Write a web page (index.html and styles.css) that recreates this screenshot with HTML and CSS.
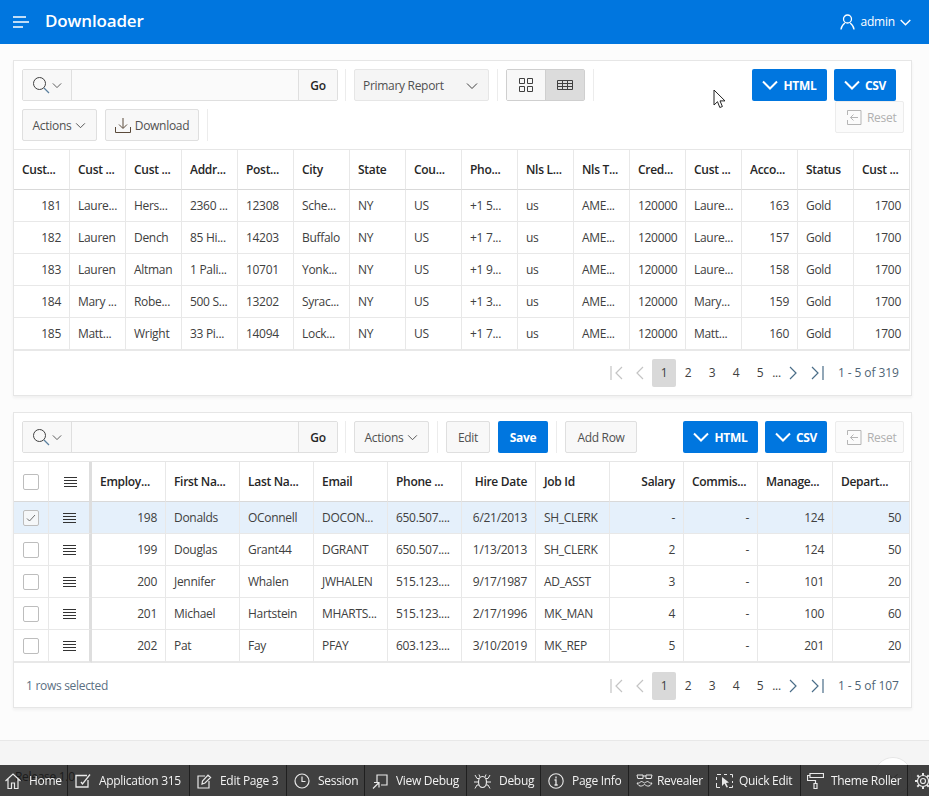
FILE: index.html
```html
<!DOCTYPE html>
<html lang="en">
<head>
<meta charset="utf-8">
<title>Downloader</title>
<link rel="stylesheet" href="styles.css">
</head>
<body>
<svg class="defs" width="0" height="0" aria-hidden="true">
  <symbol id="search" viewBox="0 0 18 18"><circle cx="7.500" cy="7.500" r="6" fill="none" stroke="#404040"/><path d="M12 12l5 5" stroke="#5a7f9e" stroke-width="1.200" fill="none"/></symbol>
  <symbol id="chev" viewBox="0 0 12 8"><path d="M1 1.500l5 5 5-5" fill="none" stroke="currentColor" stroke-width="1"/></symbol>
  <symbol id="chevb" viewBox="0 0 16 10"><path d="M1 1.500l7 7 7-7" fill="none" stroke="currentColor" stroke-width="2"/></symbol>
  <symbol id="reset" viewBox="0 0 15 15"><path d="M.5 5V.5h13.500v14H.5V10M11 7.500H3.500M6.500 4.500l-3 3 3 3" fill="none" stroke="#b5b5b5"/></symbol>
  <symbol id="handle" viewBox="0 0 13 10"><path d="M0 .5h13M0 3.500h13M0 6.500h13M0 9.500h13" stroke="#333" stroke-width="1"/></symbol>
  <symbol id="first" viewBox="0 0 13 14"><path d="M1 0v14M12 1L6 7l6 6" fill="none" stroke="#c4c4c4" stroke-width="1.200"/></symbol>
  <symbol id="prev" viewBox="0 0 8 14"><path d="M7 1L1 7l6 6" fill="none" stroke="#c4c4c4" stroke-width="1.200"/></symbol>
  <symbol id="next" viewBox="0 0 8 14"><path d="M1 1l6 6-6 6" fill="none" stroke="#4a6d88" stroke-width="1.200"/></symbol>
  <symbol id="last" viewBox="0 0 13 14"><path d="M12 0v14M1 1l6 6-6 6" fill="none" stroke="#4a6d88" stroke-width="1.200"/></symbol>
</svg>

<header class="topbar">
  <svg class="burger" width="16" height="12" viewBox="0 0 16 12"><path d="M0 1h13M0 6h16M0 11h10" stroke="#fff" stroke-width="1.600"/></svg>
  <h1 class="brand">Downloader</h1>
  <div class="user">
    <svg width="15" height="16" viewBox="0 0 15 16"><circle cx="7.500" cy="5" r="4" fill="none" stroke="#fff" stroke-width="1.300"/><path d="M1 15.500c0-3 2-5 3.800-6.500M14 15.500c0-3-2-5-3.800-6.500" fill="none" stroke="#fff" stroke-width="1.300"/></svg>
    <span class="user-name">admin</span>
    <svg width="11" height="7" viewBox="0 0 11 7"><path d="M.7 1l4.800 4.800L10.300 1" fill="none" stroke="#fff" stroke-width="1.400"/></svg>
  </div>
</header>

<main class="content">
  <section class="panel panel-a">
    <div class="toolbar toolbar-a">
      <div class="tb-left">
        <div class="tb-row">
          <div class="search">
            <button class="search-btn"><svg width="18" height="18"><use href="#search"/></svg><svg class="c" width="10" height="7"><use href="#chev"/></svg></button>
            <div class="search-input"></div>
            <button class="go">Go</button>
          </div>
          <span class="sep"></span>
          <div class="select">Primary Report<svg class="select-chev" width="12" height="8"><use href="#chev"/></svg></div>
          <span class="sep"></span>
          <div class="toggle">
            <button class="tg">
              <svg width="14" height="14" viewBox="0 0 14 14"><path d="M.5.5h5v5h-5zM8.500.5h5v5h-5zM.5 8.500h5v5h-5zM8.500 8.500h5v5h-5z" fill="none" stroke="#404040"/></svg>
            </button>
            <button class="tg tg-on">
              <svg width="16" height="10" viewBox="0 0 16 10"><path d="M.5.5h15v9H.500zM.5 3.500h15M.5 6.500h15M5.500 .5v9M10.500 .5v9" fill="none" stroke="#404040"/></svg>
            </button>
          </div>
          <span class="sep"></span>
        </div>
        <div class="tb-row">
          <button class="btn w-actions">Actions<svg class="c" width="11" height="7"><use href="#chev"/></svg></button>
          <button class="btn w-download">
            <svg width="16" height="15" viewBox="0 0 16 15"><path d="M8 0v10M4 6.500l4 4 4-4M.5 9v5.500h15V9" fill="none" stroke="#5a4a3a"/></svg>Download
          </button>
          <span class="sep"></span>
        </div>
      </div>
      <div class="tb-right">
        <button class="btn-p w-html"><svg width="16" height="10"><use href="#chevb"/></svg>HTML</button>
        <button class="btn-p w-csv"><svg width="16" height="10"><use href="#chevb"/></svg>CSV</button>
        <button class="btn-off"><svg width="15" height="15"><use href="#reset"/></svg>Reset</button>
      </div>
    </div>
    <table class="grid grid-a">
      <thead>
        <tr><th>Cust...</th><th>Cust ...</th><th>Cust ...</th><th>Addr...</th><th>Post...</th><th>City</th><th>State</th><th>Cou...</th><th>Pho...</th><th>Nls L...</th><th>Nls T...</th><th>Cred...</th><th>Cust ...</th><th>Acco...</th><th>Status</th><th>Cust ...</th></tr>
      </thead>
      <tbody>
        <tr><td class="r">181</td><td>Laure...</td><td>Hers...</td><td>2360 ...</td><td>12308</td><td>Sche...</td><td>NY</td><td>US</td><td>+1 5...</td><td>us</td><td>AME...</td><td class="r">120000</td><td>Laure...</td><td class="r">163</td><td>Gold</td><td class="r">1700</td></tr>
        <tr><td class="r">182</td><td>Lauren</td><td>Dench</td><td>85 Hi...</td><td>14203</td><td>Buffalo</td><td>NY</td><td>US</td><td>+1 7...</td><td>us</td><td>AME...</td><td class="r">120000</td><td>Laure...</td><td class="r">157</td><td>Gold</td><td class="r">1700</td></tr>
        <tr><td class="r">183</td><td>Lauren</td><td>Altman</td><td>1 Pali...</td><td>10701</td><td>Yonk...</td><td>NY</td><td>US</td><td>+1 9...</td><td>us</td><td>AME...</td><td class="r">120000</td><td>Laure...</td><td class="r">158</td><td>Gold</td><td class="r">1700</td></tr>
        <tr><td class="r">184</td><td>Mary ...</td><td>Robe...</td><td>500 S...</td><td>13202</td><td>Syrac...</td><td>NY</td><td>US</td><td>+1 3...</td><td>us</td><td>AME...</td><td class="r">120000</td><td>Mary...</td><td class="r">159</td><td>Gold</td><td class="r">1700</td></tr>
        <tr><td class="r">185</td><td>Matt...</td><td>Wright</td><td>33 Pi...</td><td>14094</td><td>Lock...</td><td>NY</td><td>US</td><td>+1 7...</td><td>us</td><td>AME...</td><td class="r">120000</td><td>Matt...</td><td class="r">160</td><td>Gold</td><td class="r">1700</td></tr>
      </tbody>
    </table>
    <div class="foot">
      <div class="pager">
        <span class="pg"><svg width="13" height="14"><use href="#first"/></svg></span>
        <span class="pg"><svg width="8" height="14"><use href="#prev"/></svg></span>
        <span class="pg pg-on">1</span><span class="pg">2</span><span class="pg">3</span><span class="pg">4</span><span class="pg">5</span><span class="dots">...</span>
        <span class="pg"><svg width="8" height="14"><use href="#next"/></svg></span>
        <span class="pg"><svg width="13" height="14"><use href="#last"/></svg></span>
        <span class="range">1 - 5 of 319</span>
      </div>
    </div>
  </section>

  <section class="panel panel-b">
    <div class="toolbar toolbar-b">
      <div class="search">
        <button class="search-btn"><svg width="18" height="18"><use href="#search"/></svg><svg class="c" width="10" height="7"><use href="#chev"/></svg></button>
        <div class="search-input"></div>
        <button class="go">Go</button>
      </div>
      <span class="sep"></span>
      <button class="btn w-actions">Actions<svg class="c" width="11" height="7"><use href="#chev"/></svg></button>
      <span class="sep"></span>
      <button class="btn w-edit">Edit</button>
      <button class="btn-p w-save">Save</button>
      <span class="sep"></span>
      <button class="btn w-add">Add Row</button>
      <div class="tb-end">
        <button class="btn-p w-html"><svg width="16" height="10"><use href="#chevb"/></svg>HTML</button>
        <button class="btn-p w-csv"><svg width="16" height="10"><use href="#chevb"/></svg>CSV</button>
        <button class="btn-off"><svg width="15" height="15"><use href="#reset"/></svg>Reset</button>
      </div>
    </div>
    <table class="grid grid-b">
      <colgroup><col class="c1"><col class="c2"><col class="cn"><col class="cn"><col class="cn"><col class="cn"><col class="cn"><col class="cn"><col class="cn"><col class="cn"><col class="cn"><col class="c12"><col class="c13"></colgroup>
      <thead>
        <tr><th class="ctr"><span class="cb"></span></th><th class="ctr frozen"><svg class="hd hd-top" width="13" height="10"><use href="#handle"/></svg></th><th>Employ...</th><th>First Na...</th><th>Last Na...</th><th>Email</th><th>Phone ...</th><th class="r">Hire Date</th><th>Job Id</th><th class="r">Salary</th><th>Commis...</th><th>Manage...</th><th>Depart...</th></tr>
      </thead>
      <tbody>
        <tr class="sel"><td class="ctr"><span class="cb"><svg width="10" height="8" viewBox="0 0 10 8"><path d="M1 4.500l2.500 2.500L9 1" fill="none" stroke="#707070"/></svg></span></td><td class="ctr frozen"><svg class="hd" width="13" height="10"><use href="#handle"/></svg></td><td class="r">198</td><td>Donalds</td><td>OConnell</td><td>DOCON...</td><td>650.507....</td><td class="r">6/21/2013</td><td>SH_CLERK</td><td class="r">-</td><td class="r">-</td><td class="r">124</td><td class="r">50</td></tr>
        <tr><td class="ctr"><span class="cb"></span></td><td class="ctr frozen"><svg class="hd" width="13" height="10"><use href="#handle"/></svg></td><td class="r">199</td><td>Douglas</td><td>Grant44</td><td>DGRANT</td><td>650.507....</td><td class="r">1/13/2013</td><td>SH_CLERK</td><td class="r">2</td><td class="r">-</td><td class="r">124</td><td class="r">50</td></tr>
        <tr><td class="ctr"><span class="cb"></span></td><td class="ctr frozen"><svg class="hd" width="13" height="10"><use href="#handle"/></svg></td><td class="r">200</td><td>Jennifer</td><td>Whalen</td><td>JWHALEN</td><td>515.123....</td><td class="r">9/17/1987</td><td>AD_ASST</td><td class="r">3</td><td class="r">-</td><td class="r">101</td><td class="r">20</td></tr>
        <tr><td class="ctr"><span class="cb"></span></td><td class="ctr frozen"><svg class="hd" width="13" height="10"><use href="#handle"/></svg></td><td class="r">201</td><td>Michael</td><td>Hartstein</td><td>MHARTS...</td><td>515.123....</td><td class="r">2/17/1996</td><td>MK_MAN</td><td class="r">4</td><td class="r">-</td><td class="r">100</td><td class="r">60</td></tr>
        <tr><td class="ctr"><span class="cb"></span></td><td class="ctr frozen"><svg class="hd" width="13" height="10"><use href="#handle"/></svg></td><td class="r">202</td><td>Pat</td><td>Fay</td><td>PFAY</td><td>603.123....</td><td class="r">3/10/2019</td><td>MK_REP</td><td class="r">5</td><td class="r">-</td><td class="r">201</td><td class="r">20</td></tr>
      </tbody>
    </table>
    <div class="foot foot-b">
      <span class="selected">1 rows selected</span>
      <div class="pager">
        <span class="pg"><svg width="13" height="14"><use href="#first"/></svg></span>
        <span class="pg"><svg width="8" height="14"><use href="#prev"/></svg></span>
        <span class="pg pg-on">1</span><span class="pg">2</span><span class="pg">3</span><span class="pg">4</span><span class="pg">5</span><span class="dots">...</span>
        <span class="pg"><svg width="8" height="14"><use href="#next"/></svg></span>
        <span class="pg"><svg width="13" height="14"><use href="#last"/></svg></span>
        <span class="range">1 - 5 of 107</span>
      </div>
    </div>
  </section>
</main>

<footer class="page-foot">Release 1.0</footer>
<div class="to-top"><svg width="12" height="7"><use href="#chev"/></svg></div>

<nav class="devbar">
  <a class="dv dv-home"><svg width="16" height="16" viewBox="0 0 16 16"><path d="M.5 8L8 1l7.500 7M3 6v9.500h3.500V10h3v5.500H13V6" fill="none" stroke="#e8e8e8" stroke-width="1.200"/></svg>Home</a>
  <a class="dv"><svg width="16" height="14" viewBox="0 0 16 14"><path d="M12 1.500H1V13h12V6M6 8l1.500 2L15 .5" fill="none" stroke="#e8e8e8" stroke-width="1.300"/></svg>Application 315</a>
  <a class="dv"><svg width="15" height="15" viewBox="0 0 15 15"><path d="M8 2H1v12h11V7M5 10l.5-3L11 1.200l2.600 2.300L8 9z" fill="none" stroke="#e8e8e8" stroke-width="1.200"/></svg>Edit Page 3</a>
  <a class="dv"><svg width="16" height="16" viewBox="0 0 16 16"><circle cx="8" cy="8" r="7" fill="none" stroke="#e8e8e8" stroke-width="1.200"/><path d="M8 3.500V8.500h3.500" fill="none" stroke="#e8e8e8" stroke-width="1.200"/></svg>Session</a>
  <a class="dv"><svg width="16" height="15" viewBox="0 0 16 15"><path d="M5 8V1h10v10H9M1 14.500l6-6M2 8.500h5v5" fill="none" stroke="#e8e8e8" stroke-width="1.200"/></svg>View Debug</a>
  <a class="dv"><svg width="17" height="15" viewBox="0 0 17 15"><ellipse cx="8.500" cy="8" rx="4" ry="5.500" fill="none" stroke="#e8e8e8" stroke-width="1.200"/><path d="M1 1l2 3.500h2M16 1l-2 3.500h-2M0 8h4.500M17 8h-4.500M1 14.500l2-3.500h2M16 14.500l-2-3.500h-2M6 3l-1-2.500M11 3l1-2.500" fill="none" stroke="#e8e8e8" stroke-width="1"/></svg>Debug</a>
  <a class="dv"><svg width="16" height="16" viewBox="0 0 16 16"><circle cx="8" cy="8" r="7.200" fill="none" stroke="#e8e8e8" stroke-width="1.100"/><path d="M8 3.500v2M6.500 7H8v5M6.500 12h3.200" fill="none" stroke="#e8e8e8" stroke-width="1.300"/></svg>Page Info</a>
  <a class="dv dv-rev"><svg width="17" height="14" viewBox="0 0 17 14"><path d="M1 1h6v3.500H1.800zM10 1h6l-.8 3.500H10zM7 2h3M1 9c2 .5 3-.5 4-1.500 1 0 2 .5 3.500 1.500C10 8 11 7.500 12 7.500c1 1 2 2 4 1.500-1 2-2.500 3.500-4.500 3-1.500-.3-2-1-3-1.500-1 .5-1.500 1.200-3 1.500C3.500 12.500 2 11 1 9z" fill="none" stroke="#e8e8e8" stroke-width="1"/></svg>Revealer</a>
  <a class="dv dv-quick"><svg width="17" height="14" viewBox="0 0 17 14"><path d="M1 .5h4M8 .5h3M14 .5h2.500v3M.5 3v3M.5 9v4.500H4M16.500 7v2M13 13.500h3.500v-2" fill="none" stroke="#e8e8e8" stroke-width="1"/><path d="M6 3l7 5.500-3 .5 2 4-1.500.5-2-4L6 12z" fill="#e8e8e8"/></svg>Quick Edit</a>
  <a class="dv dv-theme"><svg width="17" height="16" viewBox="0 0 17 16"><path d="M3 .5h13.500v4H3zM3 2.500H.5v5h8v3M7 10.500h3v5H7z" fill="none" stroke="#e8e8e8" stroke-width="1.200"/></svg>Theme Roller</a>
  <a class="dv"><svg width="16" height="16" viewBox="0 0 16 16"><circle cx="8" cy="8" r="2.500" fill="none" stroke="#e8e8e8" stroke-width="1.200"/><circle cx="8" cy="8" r="5.500" fill="none" stroke="#e8e8e8" stroke-width="1.200"/><path d="M8 0v2.500M8 13.500V16M0 8h2.500M13.500 8H16M2.300 2.300l1.800 1.800M11.900 11.900l1.800 1.800M13.700 2.300l-1.800 1.800M4.100 11.900l-1.800 1.800" stroke="#e8e8e8" stroke-width="2"/></svg></a>
</nav>

<svg class="cursor" width="13" height="20" viewBox="0 0 13 20"><path d="M1 1v15l3.500-3.300 2.300 5.800 2.600-1-2.400-5.600H12z" fill="#fff" stroke="#222" stroke-width="1"/></svg>
</body>
</html>
```

FILE: styles.css
```css
* { box-sizing: border-box; }
html, body { margin: 0; height: 796px; overflow: hidden; }
body {
  display: flex;
  flex-direction: column;
  background: #fcfcfc;
  color: #404040;
  font: 12px/16px "Open Sans", "Noto Sans", sans-serif;
  letter-spacing: -0.3px;
}
.defs { position: absolute; }
button { font: inherit; letter-spacing: inherit; color: inherit; padding: 0; margin: 0; cursor: default; }

.topbar { flex: none; height: 44px; display: flex; align-items: center; background: #0076df; color: #fff; padding: 0 18px 0 13px; }
.burger { margin-right: 16px; }
.brand { margin: 0 0 2px; font-size: 17px; font-weight: 600; letter-spacing: -0.15px; line-height: 24px; }
.user { margin-left: auto; display: flex; align-items: center; gap: 5px; font-size: 12px; letter-spacing: -0.2px; }
.user-name { color: #fff; font-weight: 500; }

.content { flex: none; padding: 16px 17px 0 13px; display: flex; flex-direction: column; gap: 16px; }
.panel { width: 899px; background: #fff; border: 1px solid #e6e6e6; box-shadow: 0 2px 3px rgba(0,0,0,.05); }
.panel-a { height: 336px; }
.panel-b { height: 296px; }

.toolbar { display: flex; padding: 8px 7px 8px 8px; border-bottom: 1px solid #e6e6e6; }
.toolbar-a { height: 89px; justify-content: space-between; }
.toolbar-b { height: 49px; }
.tb-left { display: flex; flex-direction: column; gap: 8px; }
.tb-row { display: flex; }
.tb-right { width: 153px; display: flex; flex-wrap: wrap; justify-content: flex-end; align-content: flex-start; gap: 0 7px; }
.tb-end { margin-left: auto; display: flex; gap: 7px; }
.tb-right .w-csv { margin-right: 8px; }
.tb-end .w-csv { margin-right: 1px; }

.search { width: 316px; height: 32px; margin-right: -1px; display: flex; border: 1px solid #dfdfdf; border-radius: 2px; background: #f8f8f8; }
.search-btn { flex: none; width: 49px; border: 0; border-right: 1px solid #dfdfdf; background: #f8f8f8; display: flex; align-items: center; padding-left: 9px; gap: 2px; }
.search-btn .c { color: #404040; }
.search-input { flex: 1; background: #fafafa; }
.go { flex: none; width: 39px; border: 0; border-left: 1px solid #dfdfdf; background: #f8f8f8; font-weight: 600; color: #262626; padding-top: 1px; }

.sep { flex: none; width: 1px; height: 32px; background: #ececec; margin: 0 8px; }

.select { flex: none; width: 135px; height: 32px; display: flex; align-items: center; justify-content: space-between; padding: 1px 10px 0 8px; background: #f5f5f5; border: 1px solid #e6e6e6; border-radius: 2px; color: #505050; }
.select-chev { color: #404040; }

.toggle { flex: none; display: flex; width: 79px; height: 32px; border: 1px solid #cfcfcf; border-radius: 2px; }
.tg { flex: 1; border: 0; background: #f8f8f8; display: flex; align-items: center; justify-content: center; }
.tg-on { background: #dcdcdc; border-left: 1px solid #cfcfcf; }

.btn { flex: none; height: 32px; display: flex; align-items: center; justify-content: center; gap: 3px; padding-top: 1px; background: #f8f8f8; border: 1px solid #dfdfdf; border-radius: 2px; color: #505050; }
.btn .c { color: #404040; margin-left: 1px; }
.w-actions { width: 75px; }
.w-download { width: 94px; margin-left: 8px; gap: 4px; }
.w-edit { width: 44px; }
.w-add { width: 72px; }
.btn-p { flex: none; height: 32px; display: flex; align-items: center; justify-content: center; gap: 5px; padding-top: 1px; background: #0076df; border: 0; border-radius: 2px; color: #fff; font-weight: 700; }
.btn-p svg { margin-top: -1px; }
.w-html { width: 75px; }
.w-csv { width: 62px; }
.w-save { width: 50px; margin-left: 8px; }
.btn-off { flex: none; width: 69px; height: 32px; display: flex; align-items: center; gap: 5px; padding: 1px 0 0 11px; background: #fbfbfb; border: 1px solid #ececec; border-radius: 2px; color: #b0b0b0; }

.grid { border-collapse: separate; border-spacing: 0; table-layout: fixed; }
.grid th, .grid td { padding: 0 8px; border-right: 1px solid #e8e8e8; white-space: nowrap; overflow: hidden; text-align: left; }
.grid th { height: 40px; font-weight: 600; color: #262626; border-bottom: 1px solid #d9d9d9; }
.grid td { height: 32px; border-bottom: 1px solid #e8e8e8; }
.grid tbody tr:last-child td { border-bottom: 2px solid #e8e8e8; height: 33px; }
.grid .r { text-align: right; }
.grid .ctr { text-align: center; padding: 0; }
.grid-a { width: 896px; }
.grid-a th, .grid-a td { width: 56px; }
.grid-b { width: 896px; }
.c1 { width: 35px; } .c2 { width: 43px; } .cn { width: 74px; } .c12 { width: 75px; } .c13 { width: 77px; }
.grid .frozen { border-right: 3px solid #dedede; }
.sel td { background: #e5f0fb; }
.cb { display: inline-flex; align-items: center; justify-content: center; width: 16px; height: 16px; border: 1px solid #bdbdbd; border-radius: 2px; background: #fff; vertical-align: middle; }
.sel .cb { background: #f5f7f9; }
.hd { display: inline-block; vertical-align: middle; shape-rendering: crispEdges; }
.hd-top { margin-left: 3px; }

.foot { display: flex; align-items: center; justify-content: flex-end; height: 44px; padding: 0 12px; }
.foot-b { justify-content: space-between; height: 45px; }
.selected { color: #5b7083; }
.pager { display: flex; align-items: center; }
.pg { width: 24px; height: 28px; display: flex; align-items: center; justify-content: center; border-radius: 2px; }
.pg-on { background: #d9d9d9; }
.dots { width: 9px; text-align: center; }
.range { width: 61px; margin-left: 9px; color: #4f6475; letter-spacing: -0.1px; white-space: nowrap; }

.page-foot { flex: 1; margin-top: 32px; background: #f5f5f5; border-top: 1px solid #e8e8e8; padding: 28px 0 0 15px; color: #000; }
.to-top { position: fixed; left: 874px; top: 757px; width: 38px; height: 38px; border-radius: 50%; background: #fff; border: 1px solid #e6e6e6; display: flex; align-items: center; justify-content: center; color: #404040; }

.devbar { position: fixed; left: 0; right: 0; bottom: 0; height: 31px; background: rgba(32,32,32,.85); color: #f2f2f2; display: grid; grid-template-columns: 68px 122px 97px 78px 102px 74px 88px 80px 92px 107px 1fr; font-size: 12px; overflow: hidden; }
.dv { display: flex; align-items: center; gap: 8px; padding: 1px 0 0 7px; border-right: 1px solid #1f1f1f; white-space: nowrap; }
.dv-home { padding-left: 5px; }
.dv-rev { gap: 4px; }
.dv-quick { gap: 6px; }
.dv-theme { gap: 7px; padding-left: 6px; }
.dv:last-child { border-right: 0; }

.cursor { position: fixed; left: 713px; top: 89px; }
```
